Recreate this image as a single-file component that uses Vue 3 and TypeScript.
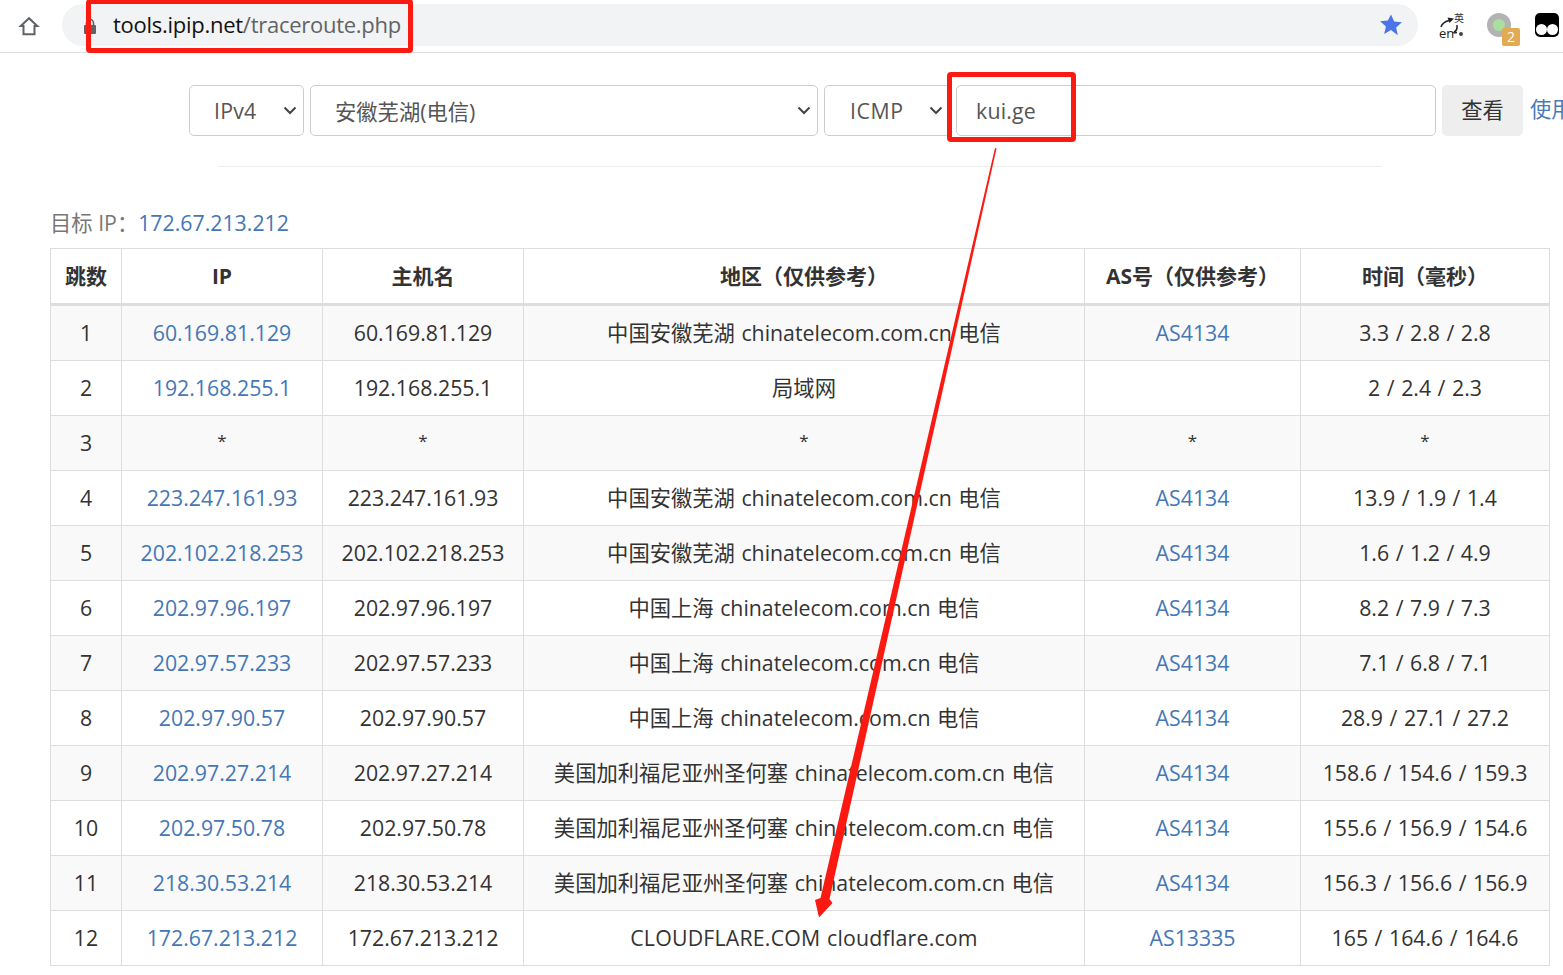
<script setup lang="ts">
interface Hop { n: number; ip: string; host: string; region: string; as: string; time: string; star?: boolean }
const telecom = ' chinatelecom.com.cn 电信'
const ah = '中国安徽芜湖' + telecom
const sh = '中国上海' + telecom
const us = '美国加利福尼亚州圣何塞' + telecom
const hops: Hop[] = [
  { n: 1, ip: '60.169.81.129', host: '60.169.81.129', region: ah, as: 'AS4134', time: '3.3 / 2.8 / 2.8' },
  { n: 2, ip: '192.168.255.1', host: '192.168.255.1', region: '局域网', as: '', time: '2 / 2.4 / 2.3' },
  { n: 3, ip: '*', host: '*', region: '*', as: '*', time: '*', star: true },
  { n: 4, ip: '223.247.161.93', host: '223.247.161.93', region: ah, as: 'AS4134', time: '13.9 / 1.9 / 1.4' },
  { n: 5, ip: '202.102.218.253', host: '202.102.218.253', region: ah, as: 'AS4134', time: '1.6 / 1.2 / 4.9' },
  { n: 6, ip: '202.97.96.197', host: '202.97.96.197', region: sh, as: 'AS4134', time: '8.2 / 7.9 / 7.3' },
  { n: 7, ip: '202.97.57.233', host: '202.97.57.233', region: sh, as: 'AS4134', time: '7.1 / 6.8 / 7.1' },
  { n: 8, ip: '202.97.90.57', host: '202.97.90.57', region: sh, as: 'AS4134', time: '28.9 / 27.1 / 27.2' },
  { n: 9, ip: '202.97.27.214', host: '202.97.27.214', region: us, as: 'AS4134', time: '158.6 / 154.6 / 159.3' },
  { n: 10, ip: '202.97.50.78', host: '202.97.50.78', region: us, as: 'AS4134', time: '155.6 / 156.9 / 154.6' },
  { n: 11, ip: '218.30.53.214', host: '218.30.53.214', region: us, as: 'AS4134', time: '156.3 / 156.6 / 156.9' },
  { n: 12, ip: '172.67.213.212', host: '172.67.213.212', region: 'CLOUDFLARE.COM cloudflare.com', as: 'AS13335', time: '165 / 164.6 / 164.6' },
]
</script>

<template>
  <div class="page">
    <header class="toolbar">
      <svg class="home" width="22" height="22" viewBox="0 0 24 24" fill="none" stroke="#5f6368" stroke-width="2.2">
        <path d="M12 3.5 3 12h3v9h12v-9h3z" stroke-linejoin="miter" />
      </svg>
      <div class="omnibox">
        <svg class="lock" width="14" height="17" viewBox="0 0 14 17">
          <path d="M3.500 7V5a3.500 3.500 0 0 1 7 0v2" fill="none" stroke="#5f6368" stroke-width="1.6" />
          <rect x="1" y="7" width="12" height="9" rx="1" fill="#5f6368" />
        </svg>
        <span class="url"><span class="url-host">tools.ipip.net</span>/traceroute.php</span>
        <svg class="star" width="26" height="26" viewBox="0 0 24 24">
          <path d="M12 2.200l2.900 6.600 7.200.7-5.400 4.800 1.600 7.100L12 16.700l-6.300 3.700 1.600-7.100-5.400-4.800 7.200-.7z" fill="#4a74e8" />
        </svg>
      </div>
      <div class="ext ext-translate">
        <span class="zh">英</span>
        <span class="en">en</span>
        <svg class="swap" width="30" height="26" viewBox="0 0 30 26" fill="none" stroke="#222" stroke-width="1.500">
          <path d="M5 14C6 10.500 9 8.500 13 7.500" />
          <path d="M11.500 4.500 18 5.500 13.500 10z" fill="#222" stroke="none" />
          <path d="M18 19c2.500-1 3.500-3 3-7" />
          <path d="M21 19.500c-2 .5-3.500.5-5 0" stroke-width="1.300" />
          <circle cx="25" cy="21" r="2" fill="#444" stroke="none" />
        </svg>
      </div>
      <div class="ext ext-dot">
        <span class="dot-inner"></span>
        <span class="badge">2</span>
      </div>
      <div class="ext ext-eyes"><i></i><i></i></div>
    </header>

    <form class="query" @submit.prevent>
      <div class="field sel-ip">IPv4<svg class="chev" width="14" height="9" viewBox="0 0 14 9"><path d="M1.500 1.500 7 7l5.500-5.500" /></svg></div>
      <div class="field sel-node">安徽芜湖(电信)<svg class="chev" width="14" height="9" viewBox="0 0 14 9"><path d="M1.500 1.500 7 7l5.500-5.500" /></svg></div>
      <div class="field sel-proto">ICMP<svg class="chev" width="14" height="9" viewBox="0 0 14 9"><path d="M1.500 1.500 7 7l5.500-5.500" /></svg></div>
      <div class="field host-input">kui.ge</div>
      <button class="submit" type="button">查看</button>
      <a class="help">使用</a>
    </form>
    <div class="rule"></div>

    <main class="result">
      <p class="target">目标 IP：<a>172.67.213.212</a></p>
      <table>
        <colgroup>
          <col class="c-hop" /><col class="c-ip" /><col class="c-ip" />
          <col class="c-region" /><col class="c-as" /><col />
        </colgroup>
        <thead>
          <tr><th>跳数</th><th>IP</th><th>主机名</th><th>地区（仅供参考）</th><th>AS号（仅供参考）</th><th>时间（毫秒）</th></tr>
        </thead>
        <tbody>
          <tr v-for="h in hops" :key="h.n">
            <td>{{ h.n }}</td>
            <td :class="{ star: h.star }"><a v-if="!h.star">{{ h.ip }}</a><template v-else>*</template></td>
            <td :class="{ star: h.star }">{{ h.host }}</td>
            <td :class="{ star: h.star }">{{ h.region }}</td>
            <td :class="{ star: h.star }"><a v-if="!h.star">{{ h.as }}</a><template v-else>*</template></td>
            <td :class="{ star: h.star }">{{ h.time }}</td>
          </tr>
        </tbody>
      </table>
    </main>

    <div class="mark mark-url"></div>
    <div class="mark mark-host"></div>
    <svg class="arrow" width="1563" height="975" viewBox="0 0 1563 975">
      <polygon points="995,148 996.500,148.500 829.500,899 832.500,903 819,917.500 815,900 820.500,898" fill="#fb1a12" />
    </svg>
  </div>
</template>

<style>
html, body { margin: 0; background: #fff; overflow: hidden; }
</style>

<style scoped>
.page {
  position: relative;
  width: 1563px;
  height: 975px;
  overflow: hidden;
  background: #fff;
  color: #333;
  font-family: "Open Sans", "Noto Sans CJK SC", sans-serif;
  font-size: 21.3px;
}
.toolbar {
  display: flex;
  align-items: center;
  height: 52px;
  border-bottom: 1px solid #dcdee1;
  box-sizing: content-box;
}
.home { margin-left: 18px; flex: none; }
.omnibox {
  display: flex;
  align-items: center;
  width: 1356px;
  height: 42px;
  margin-left: 22px;
  margin-top: -2px;
  border-radius: 21px;
  background: #f1f3f4;
  box-sizing: border-box;
  padding-left: 21px;
  padding-right: 14px;
}
.lock { flex: none; margin-top: 3px; }
.url { margin-left: 16px; margin-bottom: 2px; font-size: 22px; letter-spacing: -0.27px; color: #5f6368; white-space: nowrap; }
.url-host { color: #111; }
.star { margin-left: auto; flex: none; }
.ext { position: relative; flex: none; }
.ext-translate { width: 30px; height: 26px; margin-left: 18px; }
.zh { position: absolute; left: 18px; top: -1px; font-size: 10px; line-height: 12px; color: #333; }
.en { position: absolute; left: 3px; top: 13px; font-size: 13px; line-height: 14px; color: #222; }
.swap { position: absolute; left: 0; top: 0; }
.ext-dot {
  width: 24px;
  height: 24px;
  margin-left: 21px;
  border-radius: 50%;
  background: #b3b3b3;
  margin-top: -2px;
}
.dot-inner { position: absolute; left: 6px; top: 6px; width: 12px; height: 12px; border-radius: 50%; background: #a9e09d; }
.badge {
  position: absolute;
  left: 15px;
  top: 15px;
  width: 18px;
  height: 18px;
  border-radius: 2px;
  background: #e2aa52;
  color: #fff;
  font-size: 14px;
  line-height: 18px;
  text-align: center;
}
.ext-eyes {
  display: flex;
  align-items: flex-end;
  justify-content: center;
  width: 24px;
  height: 24px;
  margin-left: 24px;
  margin-top: -2px;
  padding-bottom: 2px;
  box-sizing: border-box;
  border-radius: 5px;
  background: #000;
}
.ext-eyes i { width: 11px; height: 11px; border-radius: 50%; background: #fff; }
.query {
  display: flex;
  gap: 6px;
  height: 51px;
  margin-top: 32px;
  padding-left: 189px;
  white-space: nowrap;
}
.field {
  display: flex;
  align-items: center;
  justify-content: space-between;
  flex: none;
  box-sizing: border-box;
  border: 1px solid #ccc;
  border-radius: 5px;
  padding: 0 6px 0 24px;
  color: #555;
  background: #fff;
}
.sel-ip { width: 115px; letter-spacing: 0.2px; }
.sel-node { width: 508px; }
.sel-proto { width: 126px; letter-spacing: 0.6px; padding-left: 25px; }
.host-input { width: 480px; padding-left: 19px; letter-spacing: 0.2px; }
.chev { fill: none; stroke: #444; stroke-width: 2; flex: none; }
.submit {
  flex: none;
  width: 81px;
  border: 0;
  border-radius: 5px;
  background: #eee;
  color: #333;
  font: inherit;
  padding: 0 0 5px;
}
.help { margin-left: 1px; color: #4a7ab5; line-height: 48px; }
.rule { height: 1px; margin: 30px 181px 0 218px; background: #eee; }
.result { padding: 0 13px 0 50px; }
.target { margin: 39px 0 9px; height: 33px; line-height: 33px; color: #777; }
a { color: #4577b5; }
table {
  width: 1500px;
  table-layout: fixed;
  border-collapse: collapse;
  border: 1px solid #ddd;
}
.c-hop { width: 71px; }
.c-ip { width: 201px; }
.c-region { width: 561px; }
.c-as { width: 216px; }
th, td {
  border: 1px solid #ddd;
  padding: 0;
  text-align: center;
  white-space: nowrap;
  line-height: 30px;
}
th { height: 54px; border-bottom-width: 3px; font-weight: 700; font-size: 21px; color: #333; }
td { height: 54px; word-spacing: 1px; }
td.star { height: 50px; padding-bottom: 4px; font-size: 17px; }
tbody tr:nth-child(odd) { background: #f9f9f9; }
tbody tr:last-child td:nth-child(4) { letter-spacing: 0.2px; }
.mark {
  position: absolute;
  box-sizing: border-box;
  border: 5px solid #fb1a12;
  border-radius: 4px;
  pointer-events: none;
}
.mark-url { left: 86px; top: -1px; width: 327px; height: 54px; }
.mark-host { left: 947px; top: 72px; width: 129px; height: 70px; }
.arrow { position: absolute; left: 0; top: 0; pointer-events: none; }
</style>
